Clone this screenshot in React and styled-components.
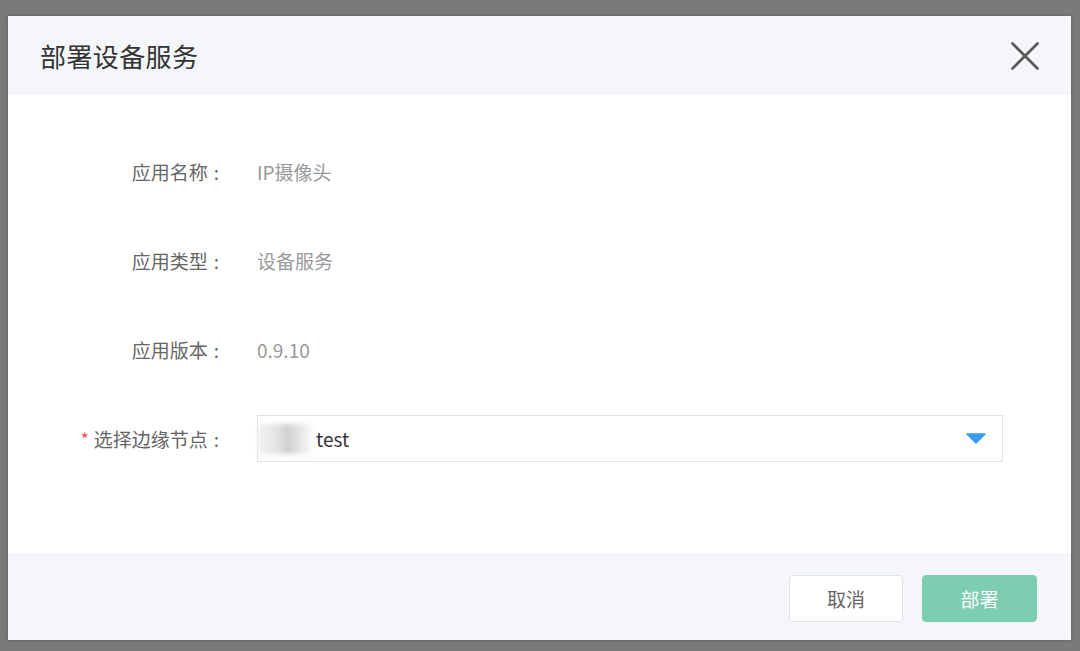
import React from 'react';
import styled, { createGlobalStyle } from 'styled-components';

const Global = createGlobalStyle`
  html, body { margin: 0; padding: 0; }
  body {
    font-family: "Noto Sans CJK SC", "Noto Sans", sans-serif;
    background: #7a7a7a;
  }
`;

const Backdrop = styled.div`
  width: 1080px;
  height: 651px;
  box-sizing: border-box;
  padding: 16px 9px 11px 8px;
  background: #7a7a7a;
  display: flex;
`;

const Dialog = styled.div`
  flex: 1;
  display: flex;
  flex-direction: column;
  background: #fff;
  box-shadow: 0 0 3px rgba(0, 0, 0, 0.25);
`;

const Header = styled.div`
  height: 79px;
  display: flex;
  align-items: center;
  justify-content: space-between;
  padding: 0 31px 0 32px;
  background: #f4f6fa;
`;

const Title = styled.div`
  font-size: 26px;
  color: #333;
  letter-spacing: 0.4px;
`;

const Close = styled.div`
  width: 30px;
  height: 30px;
  display: flex;
  align-items: center;
  justify-content: center;
  cursor: pointer;
`;

const Body = styled.div`
  flex: 1;
  display: grid;
  grid-template-columns: 212px 1fr;
  grid-auto-rows: 47px;
  row-gap: 42px;
  column-gap: 37px;
  align-content: start;
  padding: 53px 68px 0 0;
`;

const Label = styled.div`
  display: flex;
  align-items: center;
  justify-content: flex-end;
  font-size: 19px;
  color: #666;
`;

const Colon = styled.span`
  margin: 0 1px 0 6px;
`;

const Star = styled.span`
  color: #e8534f;
  margin-right: 5px;
  font-size: 17px;
`;

const Value = styled.div`
  display: flex;
  align-items: center;
  font-size: 19px;
  color: #999;
`;

const Select = styled.div`
  display: flex;
  align-items: center;
  justify-content: space-between;
  border: 1px solid #dde2ea;
  padding: 0 16px 0 0;
  font-size: 19px;
  color: #333;
`;

const Picked = styled.div`
  display: flex;
  align-items: center;
`;

const Blur = styled.span`
  display: inline-block;
  width: 54px;
  height: 30px;
  margin-right: 4px;
  background: linear-gradient(90deg, #f2f2f2 0%, #e4e4e4 35%, #cfcfcf 55%, #e8e8e8 80%, #fafafa 100%);
  filter: blur(2px);
`;

const Footer = styled.div`
  height: 87px;
  box-sizing: border-box;
  display: flex;
  justify-content: flex-end;
  align-items: flex-start;
  gap: 19px;
  padding: 22px 34px 0 0;
  background: #f4f6fa;
`;

const Button = styled.button`
  width: ${p => (p.primary ? '115px' : '114px')};
  height: 47px;
  border-radius: 4px;
  border: 1px solid ${p => (p.primary ? '#7dcdb1' : '#dfe3ea')};
  background: ${p => (p.primary ? '#7dcdb1' : '#fff')};
  color: ${p => (p.primary ? '#fff' : '#666')};
  font-family: inherit;
  font-size: 19px;
  cursor: pointer;
`;

const rows = [
  ['应用名称', 'IP摄像头'],
  ['应用类型', '设备服务'],
  ['应用版本', '0.9.10'],
];

export default function App() {
  return (
    <>
      <Global />
      <Backdrop>
        <Dialog>
          <Header>
            <Title>部署设备服务</Title>
            <Close>
              <svg width="28" height="28" viewBox="0 0 28 28">
                <path d="M1.5 1.5 L26.5 26.5 M26.5 1.5 L1.5 26.5" stroke="#5a5a5a" strokeWidth="2.8" strokeLinecap="round" />
              </svg>
            </Close>
          </Header>
          <Body>
            {rows.map(([k, v]) => (
              <React.Fragment key={k}>
                <Label>{k}<Colon>:</Colon></Label>
                <Value>{v}</Value>
              </React.Fragment>
            ))}
            <Label><Star>*</Star>选择边缘节点<Colon>:</Colon></Label>
            <Select>
              <Picked><Blur />test</Picked>
              <svg width="20" height="11" viewBox="0 0 20 11">
                <path d="M1 1 L19 1 L10 10 Z" fill="#3d9bf2" stroke="#3d9bf2" strokeWidth="1.5" strokeLinejoin="round" />
              </svg>
            </Select>
          </Body>
          <Footer>
            <Button>取消</Button>
            <Button primary>部署</Button>
          </Footer>
        </Dialog>
      </Backdrop>
    </>
  );
}
